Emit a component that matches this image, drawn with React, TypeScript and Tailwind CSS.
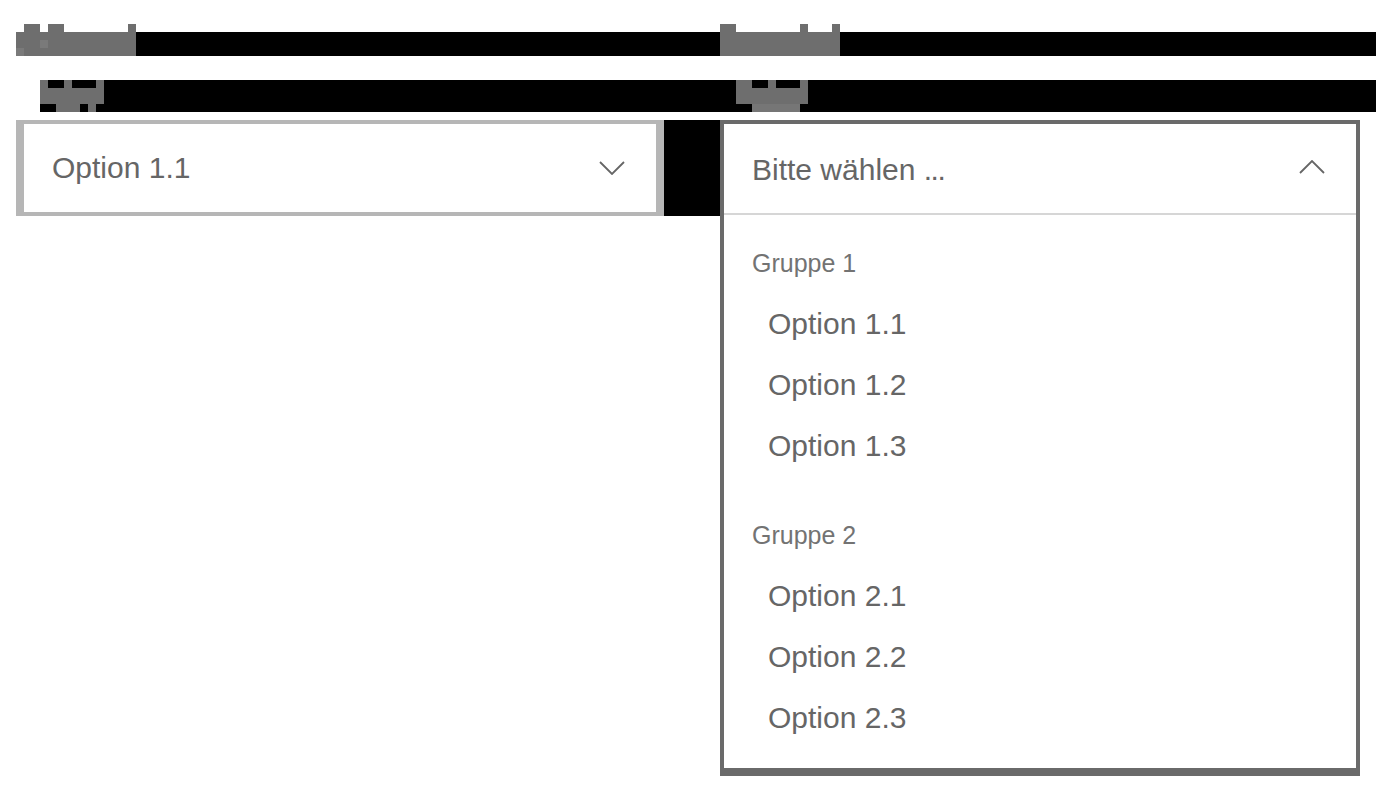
import React from "react";

const G = "#6e6e6e";
const L = "#7a7a7a";

function Cells({ w, cells, className }: { w: number; cells: [number, number, number, number, string?][]; className?: string }) {
  return (
    <svg width={w} height={32} viewBox={`0 0 ${w} 32`} className={className} shapeRendering="crispEdges">
      {cells.map(([x, y, cw, ch, c], i) => (
        <rect key={i} x={x} y={y} width={cw} height={ch} fill={c ?? G} />
      ))}
    </svg>
  );
}

function ChevronDown() {
  return (
    <svg width="26" height="14" viewBox="0 0 26 14" className="block shrink-0">
      <path d="M1 1 L13 13 L25 1" fill="none" stroke="#666666" strokeWidth="1.8" />
    </svg>
  );
}

function ChevronUp() {
  return (
    <svg width="26" height="14" viewBox="0 0 26 14" className="block shrink-0">
      <path d="M1 13 L13 1 L25 13" fill="none" stroke="#666666" strokeWidth="1.8" />
    </svg>
  );
}

const groups = [
  { label: "Gruppe 1", options: ["Option 1.1", "Option 1.2", "Option 1.3"] },
  { label: "Gruppe 2", options: ["Option 2.1", "Option 2.2", "Option 2.3"] },
];

export default function App() {
  return (
    <div className="min-h-screen bg-white pt-8 font-['Liberation_Sans','Helvetica_Neue',Arial,sans-serif]">
      {/* row 1 */}
      <div className="ml-4 mr-1 h-6 bg-black grid grid-cols-[704px_1fr]">
        <div>
          <Cells
            className="block -mt-2"
            w={120}
            cells={[
              [0, 8, 120, 24],
              [8, 0, 16, 8],
              [32, 0, 16, 8],
              [112, 0, 8, 8],
              [0, 24, 8, 8, L],
              [24, 16, 8, 8, L],
            ]}
          />
        </div>
        <div>
          <Cells
            className="block -mt-2"
            w={120}
            cells={[
              [0, 8, 120, 24],
              [0, 0, 16, 8],
              [80, 0, 8, 8],
              [112, 0, 8, 8],
            ]}
          />
        </div>
      </div>

      {/* row 2 */}
      <div className="ml-10 mr-1 mt-6 h-8 bg-black grid grid-cols-[680px_1fr]">
        <div>
          <Cells
            className="block"
            w={64}
            cells={[
              [0, 0, 8, 8],
              [24, 0, 8, 8],
              [56, 0, 8, 8],
              [0, 8, 64, 16],
              [16, 24, 24, 8],
              [48, 24, 8, 8],
            ]}
          />
        </div>
        <div className="pl-4">
          <Cells
            className="block"
            w={72}
            cells={[
              [0, 0, 16, 8],
              [32, 0, 8, 8],
              [64, 0, 8, 8],
              [0, 8, 72, 16],
              [16, 24, 48, 8, "#767676"],
            ]}
          />
        </div>
      </div>

      {/* selects */}
      <div className="mt-2 ml-4 flex items-start">
        <div className="w-[648px] h-24 border-x-8 border-y-4 border-[#b6b6b6] bg-white flex justify-between pl-7 pr-[31px]">
          <span className="block mt-[27px] text-[30px] leading-[34px] text-[#666666]">Option 1.1</span>
          <div className="mt-[37px]">
            <ChevronDown />
          </div>
        </div>
        <div className="w-14 h-24 bg-black" />
        <div className="w-[640px] h-[656px] border-t-4 border-x-4 border-b-8 border-[#6a6a6a] bg-white flex flex-col">
          <div className="h-[89px] flex justify-between pl-7 pr-[31px]">
            <span className="block mt-[29px] text-[30px] leading-[34px] text-[#666666]">
              Bitte wählen <span className="tracking-[-1.5px]">...</span>
            </span>
            <div className="mt-[36px]">
              <ChevronUp />
            </div>
          </div>
          <div className="h-[2px] bg-[#d6d6d6]" />
          <div className="pt-[19px] flex flex-col gap-[30px]">
            {groups.map((g) => (
              <div key={g.label} className="flex flex-col">
                <div className="h-[59px] leading-[59px] pl-7 text-[25px] text-[#737373]">{g.label}</div>
                {g.options.map((o) => (
                  <div key={o} className="h-[61px] leading-[61px] pl-11 text-[30px] text-[#666666]">
                    {o}
                  </div>
                ))}
              </div>
            ))}
          </div>
        </div>
      </div>
    </div>
  );
}
